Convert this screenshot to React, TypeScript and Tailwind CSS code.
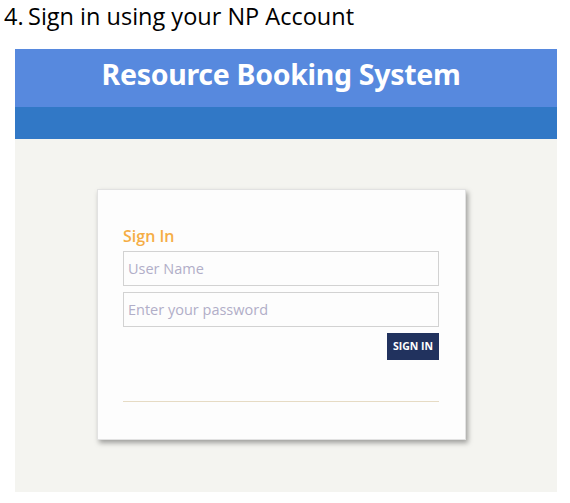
export default function App() {
  return (
    <div className="w-[570px] h-[503px] bg-white font-['Open_Sans',sans-serif]">
      <div className="pl-[4px] pt-[1px] h-[49px] text-[23.5px] leading-[30px] text-black font-['Open_Sans',sans-serif] flex">
        <span className="w-[24px]">4.</span>
        <span>Sign in using your NP Account</span>
      </div>
      <div className="ml-[15px] w-[542px] h-[443px] bg-[#f4f4f0] flex flex-col">
        <div className="h-[58px] bg-[#5789de] flex justify-center items-center pb-[8px] pr-[10px]">
          <span className="text-white font-bold text-[28.5px] font-['Noto_Sans',sans-serif] tracking-[-0.3px]">
            Resource Booking System
          </span>
        </div>
        <div className="h-[32px] bg-[#3178c6]" />
        <div className="flex pt-[50px] pl-[82px]">
          <div className="w-[369px] h-[251px] bg-[#fdfdfd] shadow-[2px_3px_5px_rgba(0,0,0,0.35)] border border-[#e2e2e2] pl-[25px] pr-[26px] pt-[35px]">
            <div className="text-[#f5ad45] text-[16px] font-semibold leading-[22px] mb-[4px]">Sign In</div>
            <div className="h-[35px] border border-[#d2d2d2] flex items-center px-[4px] text-[14.5px] text-[#b1aec8]">
              User Name
            </div>
            <div className="h-[35px] mt-[6px] border border-[#d2d2d2] flex items-center px-[4px] text-[14.5px] text-[#b1aec8]">
              Enter your password
            </div>
            <div className="flex justify-end mt-[6px]">
              <div className="w-[52px] h-[27px] bg-[#21325e] text-white text-[10.5px] font-bold flex items-center justify-center">
                SIGN IN
              </div>
            </div>
            <div className="mt-[41px] h-[1px] bg-[#e6dbc4]" />
          </div>
        </div>
      </div>
    </div>
  );
}
